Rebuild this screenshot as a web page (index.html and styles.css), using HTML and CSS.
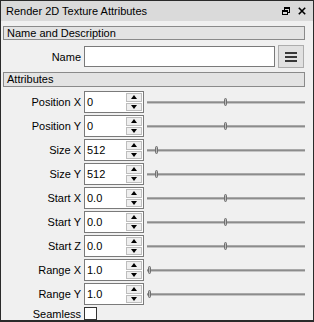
FILE: index.html
```html
<!DOCTYPE html>
<html>
<head>
<meta charset="utf-8">
<link rel="stylesheet" href="styles.css">
</head>
<body>
<div class="window">
  <div class="titlebar">
    <span class="title">Render 2D Texture Attributes</span>
    <span class="tb-icons">
      <svg class="tb-icon" width="8" height="8" viewBox="0 0 8 8"><path d="M2 0h6v6h-2v-1h1v-3h-4v1h-1z" fill="#000"/><path d="M0 3h6v5h-6z M1 5v2h4v-2z" fill="#000" fill-rule="evenodd"/></svg>
      <svg class="tb-icon" width="8" height="8" viewBox="0 0 8 8"><path d="M0.8 0.8L7.2 7.2M7.2 0.8L0.8 7.2" stroke="#000" stroke-width="1.6"/></svg>
    </span>
  </div>
  <div class="content">
    <div class="section">Name and Description</div>
    <div class="name-row">
      <div class="lbl">Name</div>
      <div class="textbox"></div>
      <div class="menu-btn">
        <svg width="12" height="10" viewBox="0 0 12 10"><path d="M0 1h12M0 5h12M0 9h12" stroke="#000" stroke-width="1.6"/></svg>
      </div>
    </div>
    <div class="section section-attr">Attributes</div>
    <div class="rows">
      <div class="row"><div class="lbl">Position X</div><div class="spin"><span class="val">0</span><div class="spin-btns"><div class="sb up"></div><div class="sb down"></div></div></div><div class="slider"><div class="groove"></div><div class="thumb" style="left:49.5%"></div></div></div>
      <div class="row"><div class="lbl">Position Y</div><div class="spin"><span class="val">0</span><div class="spin-btns"><div class="sb up"></div><div class="sb down"></div></div></div><div class="slider"><div class="groove"></div><div class="thumb" style="left:49.5%"></div></div></div>
      <div class="row"><div class="lbl">Size X</div><div class="spin"><span class="val">512</span><div class="spin-btns"><div class="sb up"></div><div class="sb down"></div></div></div><div class="slider"><div class="groove"></div><div class="thumb" style="left:6%"></div></div></div>
      <div class="row"><div class="lbl">Size Y</div><div class="spin"><span class="val">512</span><div class="spin-btns"><div class="sb up"></div><div class="sb down"></div></div></div><div class="slider"><div class="groove"></div><div class="thumb" style="left:6%"></div></div></div>
      <div class="row"><div class="lbl">Start X</div><div class="spin"><span class="val">0.0</span><div class="spin-btns"><div class="sb up"></div><div class="sb down"></div></div></div><div class="slider"><div class="groove"></div><div class="thumb" style="left:49.5%"></div></div></div>
      <div class="row"><div class="lbl">Start Y</div><div class="spin"><span class="val">0.0</span><div class="spin-btns"><div class="sb up"></div><div class="sb down"></div></div></div><div class="slider"><div class="groove"></div><div class="thumb" style="left:49.5%"></div></div></div>
      <div class="row"><div class="lbl">Start Z</div><div class="spin"><span class="val">0.0</span><div class="spin-btns"><div class="sb up"></div><div class="sb down"></div></div></div><div class="slider"><div class="groove"></div><div class="thumb" style="left:49.5%"></div></div></div>
      <div class="row"><div class="lbl">Range X</div><div class="spin"><span class="val">1.0</span><div class="spin-btns"><div class="sb up"></div><div class="sb down"></div></div></div><div class="slider"><div class="groove"></div><div class="thumb" style="left:1%"></div></div></div>
      <div class="row"><div class="lbl">Range Y</div><div class="spin"><span class="val">1.0</span><div class="spin-btns"><div class="sb up"></div><div class="sb down"></div></div></div><div class="slider"><div class="groove"></div><div class="thumb" style="left:1%"></div></div></div>
      <div class="row row-check"><div class="lbl">Seamless</div><div class="checkbox"></div></div>
    </div>
  </div>
</div>
</body>
</html>
```
FILE: styles.css
```css
* { box-sizing: border-box; }
html, body { margin: 0; padding: 0; background: #f0f0f0; }
.window {
  width: 314px;
  height: 322px;
  border: 1px solid #2a2a2a;
  border-bottom-width: 2px;
  background: #f0f0f0;
  font-family: "Liberation Sans", Arial, sans-serif;
  font-size: 11px;
  color: #000;
  display: flex;
  flex-direction: column;
  overflow: hidden;
}
.titlebar {
  height: 20px;
  background: #dadada;
  display: flex;
  align-items: center;
  justify-content: space-between;
  padding: 0 7px 1px 5px;
  font-size: 11px;
}
.tb-icons { display: flex; align-items: center; gap: 8px; padding-top: 1px; }
.tb-icon { display: block; }
.content { padding: 5px 8px 0 2px; display: flex; flex-direction: column; }
.section {
  height: 14px;
  border: 1px solid #8a8a8a;
  background: #e3e3e3;
  padding-left: 3px;
  line-height: 12px;
  font-size: 11px;
}
.name-row {
  display: flex;
  align-items: center;
  height: 23px;
  margin: 5px 0 4px;
}
.lbl {
  width: 80px;
  flex: none;
  text-align: right;
  padding-right: 1px;
  margin-left: -1px;
  margin-right: 2px;
  font-size: 11px;
}
.textbox {
  flex: 1;
  height: 21px;
  border: 1px solid #7a7a7a;
  background: #fff;
}
.menu-btn {
  width: 26px;
  height: 23px;
  margin-left: 3px;
  margin-right: 1px;
  border: 1px solid #adadad;
  background: #e1e1e1;
  display: flex;
  align-items: center;
  justify-content: center;
}
.menu-btn svg { display: block; }
.section-attr { height: 15px; line-height: 13px; }
.rows { display: flex; flex-direction: column; gap: 2px; margin-top: 4px; }
.row { display: flex; align-items: center; height: 22px; }
.spin {
  width: 60px;
  height: 22px;
  flex: none;
  border: 1px solid #7a7a7a;
  background: #fff;
  display: flex;
  align-items: center;
  justify-content: space-between;
  padding-left: 2px;
  font-size: 11px;
}
.spin-btns {
  width: 17px;
  height: 20px;
  display: flex;
  flex-direction: column;
  gap: 1px;
  padding: 1px 1px 1px 0;
}
.sb {
  flex: 1;
  border: 1px solid #bdbdbd;
  background: #efefef;
  display: flex;
  align-items: center;
  justify-content: center;
}
.sb::after {
  content: "";
  width: 0; height: 0;
  border-left: 3px solid transparent;
  border-right: 3px solid transparent;
}
.up::after { border-bottom: 4px solid #000; }
.down::after { border-top: 4px solid #000; }
.slider {
  flex: 1;
  height: 22px;
  margin-left: 3px;
  position: relative;
  display: flex;
  align-items: center;
}
.groove {
  width: 100%;
  height: 3px;
  background: #8c8c8c;
  border-top: 1px solid #a8a8a8;
  border-bottom: 1px solid #c4c4c4;
}
.thumb {
  position: absolute;
  top: 7px;
  width: 3px;
  height: 8px;
  margin-left: -1px;
  border: 1px solid #6f6f6f;
  border-radius: 2px;
  background: #b8b8b8;
}
.row-check { height: 13px; }
.checkbox {
  width: 13px;
  height: 13px;
  border: 1px solid #333;
  background: #fff;
}
```
